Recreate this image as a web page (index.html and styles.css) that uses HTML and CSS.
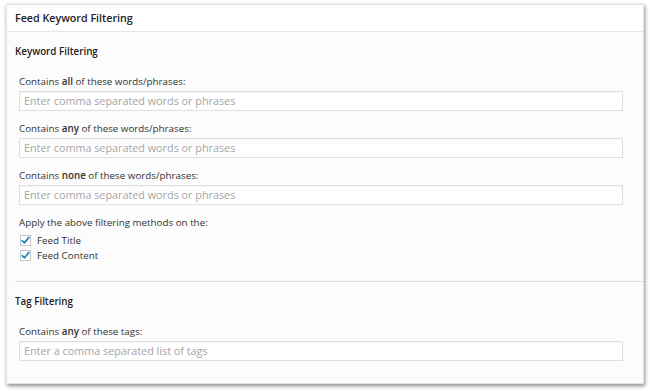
FILE: index.html
```html
<!DOCTYPE html>
<html>
<head>
<meta charset="utf-8">
<link rel="stylesheet" href="styles.css">
</head>
<body>
<div class="panel">
  <div class="panel-header">Feed Keyword Filtering</div>
  <div class="section">
    <div class="section-title">Keyword Filtering</div>
    <div class="fields">
      <div class="field">
        <div class="label">Contains <b>all</b> of these words/phrases:</div>
        <div class="input">Enter comma separated words or phrases</div>
      </div>
      <div class="field">
        <div class="label">Contains <b>any</b> of these words/phrases:</div>
        <div class="input">Enter comma separated words or phrases</div>
      </div>
      <div class="field">
        <div class="label">Contains <b>none</b> of these words/phrases:</div>
        <div class="input">Enter comma separated words or phrases</div>
      </div>
      <div class="field">
        <div class="label">Apply the above filtering methods on the:</div>
        <div class="check-row first">
          <span class="checkbox"><svg viewBox="0 0 11 11" width="11" height="11"><path d="M2.2 5.6 L4.4 7.9 L8.9 2.4" fill="none" stroke="#1e8cbe" stroke-width="1.7" stroke-linecap="round" stroke-linejoin="round"/></svg></span>
          <span>Feed Title</span>
        </div>
        <div class="check-row">
          <span class="checkbox"><svg viewBox="0 0 11 11" width="11" height="11"><path d="M2.2 5.6 L4.4 7.9 L8.9 2.4" fill="none" stroke="#1e8cbe" stroke-width="1.7" stroke-linecap="round" stroke-linejoin="round"/></svg></span>
          <span>Feed Content</span>
        </div>
      </div>
    </div>
  </div>
  <div class="divider"></div>
  <div class="section">
    <div class="section-title tag-title">Tag Filtering</div>
    <div class="fields">
      <div class="field">
        <div class="label">Contains <b>any</b> of these tags:</div>
        <div class="input">Enter a comma separated list of tags</div>
      </div>
    </div>
  </div>
</div>
</body>
</html>
```

FILE: styles.css
```css
html, body {
  margin: 0;
  padding: 0;
  background: #ffffff;
}
body {
  padding: 4px 6px 7px 6px;
  font-family: "Open Sans", "Liberation Sans", sans-serif;
  color: #333;
}
.panel {
  width: 638px;
  height: 380px;
  box-sizing: border-box;
  background: #fcfcfc;
  border: 1px solid #e2e2e2;
  box-shadow: 1px 2px 4px rgba(0,0,0,0.45);
  display: flex;
  flex-direction: column;
}
.panel-header {
  height: 26px;
  line-height: 26px;
  padding-left: 8px;
  font-size: 10.7px;
  font-weight: 600;
  color: #222;
  background: #fff;
  border-bottom: 1px solid #e6e6e6;
}
.section {
  padding-left: 8px;
  display: flex;
  flex-direction: column;
}
.section-title {
  margin-top: 12px;
  line-height: 16px;
  font-size: 9.8px;
  font-weight: 600;
  color: #222;
}
.fields {
  padding: 0 20px 0 4px;
  display: flex;
  flex-direction: column;
}
.field {
  margin-top: 14px;
  display: flex;
  flex-direction: column;
}
.field + .field {
  margin-top: 10px;
}
.label {
  line-height: 16px;
  font-size: 9.8px;
  color: #333;
}
.label b {
  font-weight: 600;
}
.input {
  margin-top: 1px;
  height: 20px;
  box-sizing: border-box;
  border: 1px solid #dedede;
  background: #fff;
  padding-left: 4px;
  line-height: 18px;
  font-size: 10.8px;
  color: #a5a5a5;
  box-shadow: inset 0 1px 2px rgba(0,0,0,0.04);
}
.check-row {
  display: flex;
  align-items: center;
  height: 15px;
  font-size: 9.8px;
  color: #333;
}
.check-row.first {
  margin-top: 2px;
}
.checkbox {
  width: 11px;
  height: 11px;
  box-sizing: border-box;
  border: 1px solid #c8c8c8;
  background: #fff;
  margin: 0 6px 0 1px;
  position: relative;
  display: inline-block;
}
.checkbox svg {
  position: absolute;
  left: -1px;
  top: -1px;
}
.divider {
  margin-top: 18px;
  margin-left: 8px;
  height: 1px;
  background: #dcdcdc;
}
.tag-title {
  margin-top: 12px;
}
```
